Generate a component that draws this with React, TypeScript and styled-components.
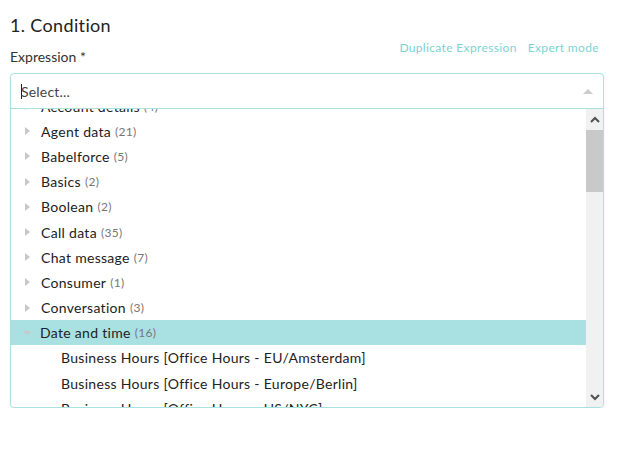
import React from 'react';
import styled, { createGlobalStyle } from 'styled-components';

const teal = '#a9e1e2';
const tealText = '#7dd3d3';

const GlobalStyle = createGlobalStyle`
  body {
    margin: 0;
    background: #fff;
    font-family: Lato, 'Open Sans', sans-serif;
    color: #333;
  }
`;

const Page = styled.div`
  padding: 0 18px 0 10px;
  width: 594px;
`;

const Title = styled.h3`
  margin: 14px 0 0;
  font-size: 18px;
  line-height: 22px;
  font-weight: 400;
  letter-spacing: 0.35px;
  color: #222;
`;

const HeaderRow = styled.div`
  display: flex;
  justify-content: space-between;
  align-items: flex-start;
  margin: 3.5px 0 6.5px;
`;

const Label = styled.label`
  padding-top: 7px;
  font-size: 14px;
  line-height: 20px;
  color: #333;
`;

const Links = styled.div`
  display: flex;
  gap: 11px;
  padding-right: 5px;
`;

const LinkButton = styled.a`
  font-size: 12px;
  line-height: 16px;
  letter-spacing: 0.35px;
  color: ${tealText};
  cursor: pointer;
`;

const SelectBox = styled.div`
  border: 1px solid ${teal};
  border-radius: 4px;
  height: 333px;
  display: flex;
  flex-direction: column;
  overflow: hidden;
  box-shadow: 0 1px 2px rgba(0, 0, 0, 0.08);
`;

const Control = styled.div`
  height: 34px;
  flex: none;
  display: flex;
  align-items: center;
  padding: 0 10px;
  border-bottom: 1px solid ${teal};
`;

const Caret = styled.span`
  width: 1px;
  height: 15px;
  background: #222;
`;

const Placeholder = styled.span`
  flex: 1;
  font-size: 14px;
  letter-spacing: 0.2px;
  color: #444;
  margin-left: -1px;
`;

const ArrowUp = styled.span`
  width: 0;
  height: 0;
  border-left: 5px solid transparent;
  border-right: 5px solid transparent;
  border-bottom: 5px solid #ccc;
`;

const Menu = styled.div`
  flex: 1;
  display: flex;
  min-height: 0;
`;

const List = styled.div`
  flex: 1;
  overflow: hidden;
`;

const ListInner = styled.div`
  margin-top: -15.5px;
`;

const Row = styled.div<{ $selected?: boolean; $child?: boolean }>`
  height: 25.2px;
  display: flex;
  align-items: center;
  padding-left: ${(p) => (p.$child ? '50px' : '14px')};
  background: ${(p) => (p.$selected ? teal : 'transparent')};
  font-size: 14px;
  letter-spacing: 0.3px;
  color: #222;
  white-space: nowrap;
`;

const Toggle = styled.span<{ $open?: boolean }>`
  width: 0;
  height: 0;
  margin-right: ${(p) => (p.$open ? '9px' : '11px')};
  margin-left: ${(p) => (p.$open ? '-2px' : '0')};
  ${(p) =>
    p.$open
      ? `border-left: 4px solid transparent;
         border-right: 4px solid transparent;
         border-top: 4px solid #c8c8c8;`
      : `border-top: 4px solid transparent;
         border-bottom: 4px solid transparent;
         border-left: 5px solid #c8c8c8;`}
`;

const Count = styled.span`
  margin-left: 4px;
  font-size: 12px;
  color: #777;
`;

const Scrollbar = styled.div`
  width: 17px;
  flex: none;
  background: #f1f1f1;
  display: flex;
  flex-direction: column;
`;

const ScrollButton = styled.div`
  height: 21px;
  display: flex;
  align-items: center;
  justify-content: center;
`;

const Thumb = styled.div`
  height: 62px;
  background: #c9c9c9;
`;

const Track = styled.div`
  flex: 1;
`;

const Chevron = ({ up }: { up?: boolean }) => (
  <svg width="10" height="8" viewBox="0 0 10 8">
    <polyline
      points={up ? '1,6 5,2 9,6' : '1,2 5,6 9,2'}
      fill="none"
      stroke="#505050"
      strokeWidth="2"
    />
  </svg>
);

const groups = [
  { name: 'Account details', count: 4 },
  { name: 'Agent data', count: 21 },
  { name: 'Babelforce', count: 5 },
  { name: 'Basics', count: 2 },
  { name: 'Boolean', count: 2 },
  { name: 'Call data', count: 35 },
  { name: 'Chat message', count: 7 },
  { name: 'Consumer', count: 1 },
  { name: 'Conversation', count: 3 },
  { name: 'Date and time', count: 16, open: true },
];

const children = [
  'Business Hours [Office Hours - EU/Amsterdam]',
  'Business Hours [Office Hours - Europe/Berlin]',
  'Business Hours [Office Hours - US/NYC]',
];

export default function App() {
  return (
    <>
      <GlobalStyle />
      <Page>
        <Title>1. Condition</Title>
        <HeaderRow>
          <Label>Expression *</Label>
          <Links>
            <LinkButton>Duplicate Expression</LinkButton>
            <LinkButton>Expert mode</LinkButton>
          </Links>
        </HeaderRow>
        <SelectBox>
          <Control>
            <Caret />
            <Placeholder>Select...</Placeholder>
            <ArrowUp />
          </Control>
          <Menu>
            <List>
              <ListInner>
                {groups.map((g) => (
                  <Row key={g.name} $selected={g.open}>
                    <Toggle $open={g.open} />
                    {g.name}
                    <Count>({g.count})</Count>
                  </Row>
                ))}
                {children.map((c) => (
                  <Row key={c} $child>
                    {c}
                  </Row>
                ))}
              </ListInner>
            </List>
            <Scrollbar>
              <ScrollButton>
                <Chevron up />
              </ScrollButton>
              <Thumb />
              <Track />
              <ScrollButton>
                <Chevron />
              </ScrollButton>
            </Scrollbar>
          </Menu>
        </SelectBox>
      </Page>
    </>
  );
}
